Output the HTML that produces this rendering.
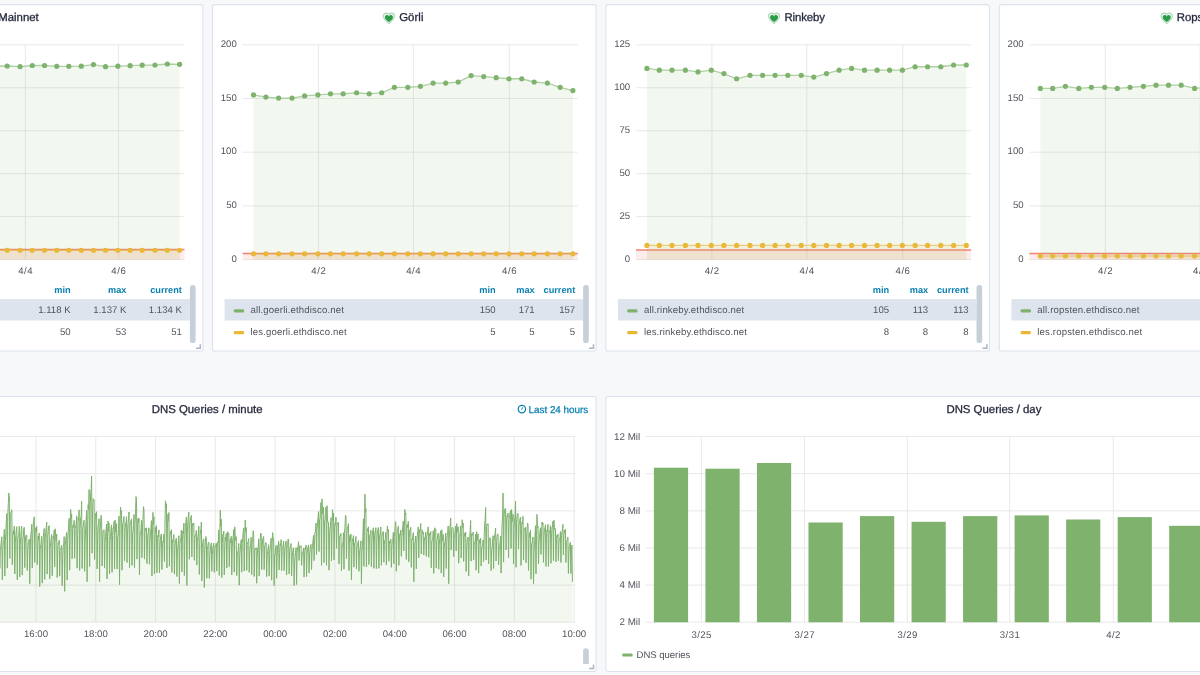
<!DOCTYPE html>
<html lang="en">
<head>
<meta charset="utf-8">
<title>DNS Discovery - Grafana</title>
<style>
*{box-sizing:border-box}
html,body{margin:0;padding:0}
body{width:1200px;height:675px;overflow:hidden;background:#f7f8fa;font-family:"Liberation Sans",sans-serif;color:#52545c;text-rendering:geometricPrecision}
.dash{position:relative;width:1200px;height:675px;overflow:hidden}
.panel{position:absolute;margin:0;will-change:transform}
.gfx{position:absolute;left:0;top:0;display:block;overflow:visible}
.gfx text{font-family:"Liberation Sans",sans-serif;text-rendering:geometricPrecision}
.title{position:absolute;margin:0;font-size:11.4px;line-height:14px;font-weight:400;color:#262a3d;white-space:nowrap;-webkit-text-stroke:0.3px #262a3d}
.tinfo{position:absolute;font-size:9.9px;line-height:13px;color:#0a80b2;white-space:nowrap;-webkit-text-stroke:0.25px #0a80b2}
.legend span{position:absolute;white-space:nowrap;font-size:9.6px;line-height:13px}
.legend .nm{letter-spacing:0.15px}
.legend .th{font-size:9.2px;font-weight:700;color:#0a80b2}
</style>
</head>
<body>
<main class="dash">
<section class="panel" style="left:-181px;top:4px;width:385px;height:348px">
<svg class="gfx" width="385" height="348" viewBox="-181 4 385 348">
<rect x="-180.7" y="4.6" width="383.6" height="346.47" rx="2.4" fill="#fff" stroke="#dce2ec" stroke-width="1.05"/>
<path d="M-139.4 259.6H184.5M-139.4 216.64H184.5M-139.4 173.68H184.5M-139.4 130.72H184.5M-139.4 87.76H184.5M-139.4 44.8H184.5M-67.7 44.6V259.6M25.4 44.6V259.6M118.5 44.6V259.6" stroke="#e6e6e6" stroke-width="0.88" fill="none"/>
<rect x="-139.4" y="249.92" width="323.9" height="9.68" fill="rgba(234,112,112,0.13)"/>
<path d="M-139.4 249.52H184.5" stroke="rgba(237,46,24,0.6)" stroke-width="1.6" fill="none"/>
<path d="M-128.9 66L-116.92 66L-104.66 66L-91.71 66L-79.54 66L-66.7 66L-54.53 66L-42.26 66L-29.32 66L-17.15 66L-5.08 66L7.19 66L20.13 66.6L32.3 65.5L44.57 65.5L56.74 66.3L68.81 66.3L81.27 66.15L93.44 64.6L105.52 66.65L117.88 66.15L130.15 65.65L142.22 65.15L154.97 65L167.33 64L179.6 64.3L179.6 259.6L-128.9 259.6Z" fill="#7eb26d" fill-opacity="0.1"/>
<path d="M-128.9 66L-116.92 66L-104.66 66L-91.71 66L-79.54 66L-66.7 66L-54.53 66L-42.26 66L-29.32 66L-17.15 66L-5.08 66L7.19 66L20.13 66.6L32.3 65.5L44.57 65.5L56.74 66.3L68.81 66.3L81.27 66.15L93.44 64.6L105.52 66.65L117.88 66.15L130.15 65.65L142.22 65.15L154.97 65L167.33 64L179.6 64.3" stroke="#7eb26d" stroke-width="1.3" stroke-opacity="0.6" fill="none"/>
<g fill="#7eb26d"><circle cx="7.19" cy="66" r="2.6"/><circle cx="20.13" cy="66.6" r="2.6"/><circle cx="32.3" cy="65.5" r="2.6"/><circle cx="44.57" cy="65.5" r="2.6"/><circle cx="56.74" cy="66.3" r="2.6"/><circle cx="68.81" cy="66.3" r="2.6"/><circle cx="81.27" cy="66.15" r="2.6"/><circle cx="93.44" cy="64.6" r="2.6"/><circle cx="105.52" cy="66.65" r="2.6"/><circle cx="117.88" cy="66.15" r="2.6"/><circle cx="130.15" cy="65.65" r="2.6"/><circle cx="142.22" cy="65.15" r="2.6"/><circle cx="154.97" cy="65" r="2.6"/><circle cx="167.33" cy="64" r="2.6"/><circle cx="179.6" cy="64.3" r="2.6"/></g>
<path d="M-128.9 250.26L-116.92 250.26L-104.66 250.26L-91.71 250.26L-79.54 250.26L-66.7 250.26L-54.53 250.26L-42.26 250.26L-29.32 250.26L-17.15 250.26L-5.08 250.26L7.19 250.26L20.13 250.26L32.3 250.26L44.57 250.26L56.74 250.26L68.81 250.26L81.27 250.26L93.44 250.26L105.52 250.26L117.88 250.26L130.15 250.26L142.22 250.26L154.97 250.26L167.33 250.26L179.6 250.26L179.6 259.6L-128.9 259.6Z" fill="#eab839" fill-opacity="0.1"/>
<path d="M-128.9 250.26L-116.92 250.26L-104.66 250.26L-91.71 250.26L-79.54 250.26L-66.7 250.26L-54.53 250.26L-42.26 250.26L-29.32 250.26L-17.15 250.26L-5.08 250.26L7.19 250.26L20.13 250.26L32.3 250.26L44.57 250.26L56.74 250.26L68.81 250.26L81.27 250.26L93.44 250.26L105.52 250.26L117.88 250.26L130.15 250.26L142.22 250.26L154.97 250.26L167.33 250.26L179.6 250.26" stroke="#eab839" stroke-width="1.3" stroke-opacity="0.6" fill="none"/>
<g fill="#eab839"><circle cx="7.19" cy="250.26" r="2.6"/><circle cx="20.13" cy="250.26" r="2.6"/><circle cx="32.3" cy="250.26" r="2.6"/><circle cx="44.57" cy="250.26" r="2.6"/><circle cx="56.74" cy="250.26" r="2.6"/><circle cx="68.81" cy="250.26" r="2.6"/><circle cx="81.27" cy="250.26" r="2.6"/><circle cx="93.44" cy="250.26" r="2.6"/><circle cx="105.52" cy="250.26" r="2.6"/><circle cx="117.88" cy="250.26" r="2.6"/><circle cx="130.15" cy="250.26" r="2.6"/><circle cx="142.22" cy="250.26" r="2.6"/><circle cx="154.97" cy="250.26" r="2.6"/><circle cx="167.33" cy="250.26" r="2.6"/><circle cx="179.6" cy="250.26" r="2.6"/></g>
<g class="ax">
<text x="-145.2" y="261.64" text-anchor="end" font-size="9.6" fill="#52545c">0</text>
<text x="-145.2" y="218.68" text-anchor="end" font-size="9.6" fill="#52545c">250</text>
<text x="-145.2" y="175.72" text-anchor="end" font-size="9.6" fill="#52545c">500</text>
<text x="-145.2" y="132.76" text-anchor="end" font-size="9.6" fill="#52545c">750</text>
<text x="-145.2" y="89.8" text-anchor="end" font-size="9.6" fill="#52545c">1.0 K</text>
<text x="-145.2" y="46.84" text-anchor="end" font-size="9.6" fill="#52545c">1.3 K</text>
<text x="-67.4" y="273.84" text-anchor="middle" font-size="9.6" fill="#52545c" letter-spacing="0.55">4/2</text>
<text x="25.7" y="273.84" text-anchor="middle" font-size="9.6" fill="#52545c" letter-spacing="0.55">4/4</text>
<text x="118.8" y="273.84" text-anchor="middle" font-size="9.6" fill="#52545c" letter-spacing="0.55">4/6</text>
</g>
<rect x="-168.6" y="299.1" width="358.4" height="21.4" fill="#dde4ed"/>
<rect x="-159.4" y="309.3" width="10.3" height="3.2" rx="1.2" fill="#7eb26d"/>
<rect x="-159.4" y="331.1" width="10.3" height="3.2" rx="1.2" fill="#eab839"/>
<rect x="189.9" y="285.1" width="5.7" height="58" rx="2.85" fill="#c7d0d9"/>
<path d="M195.9 348.2H200.3V344.2" stroke="#adb5c1" stroke-width="1.5" fill="none"/>
<g class="heart"><path d="M12 21.5 C5 15.5 1 11.8 1 7.2 C1 3.6 3.7 1 7 1 C9 1 10.9 2 12 3.4 C13.1 2 15 1 17 1 C20.3 1 23 3.6 23 7.2 C23 11.8 19 15.5 12 21.5 Z" transform="translate(-18.65 13.15) scale(0.5091 0.5122) translate(-1 -1)" fill="#299c46" fill-opacity="0.08" stroke="#299c46" stroke-opacity="0.36" stroke-width="2.1"/><path d="M12 21.5 C5 15.5 1 11.8 1 7.2 C1 3.6 3.7 1 7 1 C9.4 1 11.2 2.8 12 6 C12.8 2.8 14.6 1 17 1 C20.3 1 23 3.6 23 7.2 C23 11.8 19 15.5 12 21.5 Z" transform="translate(-17.1 15.1) scale(0.3682 0.3317) translate(-1 -1)" fill="#299c46"/></g>
</svg>
<h2 class="title" style="left:179.2px;top:6.7px;letter-spacing:0px">Mainnet</h2>
<div class="legend">
<div class="lrow lhead"><span class="th" style="right:133.4px;top:279.8px">min</span><span class="th" style="right:77.6px;top:279.8px">max</span><span class="th" style="right:22.1px;top:279.8px">current</span></div>
<div class="lrow"><span class="nm" style="left:38.3px;top:299.5px">all.mainnet.ethdisco.net</span><span class="td" style="right:133.4px;top:299.5px">1.118 K</span><span class="td" style="right:77.6px;top:299.5px">1.137 K</span><span class="td" style="right:22.1px;top:299.5px">1.134 K</span></div>
<div class="lrow"><span class="nm" style="left:38.3px;top:321.6px">les.mainnet.ethdisco.net</span><span class="td" style="right:133.4px;top:321.6px">50</span><span class="td" style="right:77.6px;top:321.6px">53</span><span class="td" style="right:22.1px;top:321.6px">51</span></div>
</div>
</section>
<section class="panel" style="left:212px;top:4px;width:385px;height:348px">
<svg class="gfx" width="385" height="348" viewBox="212 4 385 348">
<rect x="212.5" y="4.6" width="383.6" height="346.47" rx="2.4" fill="#fff" stroke="#dce2ec" stroke-width="1.05"/>
<path d="M242.6 259.6H577.7M242.6 205.9H577.7M242.6 152.2H577.7M242.6 98.5H577.7M242.6 44.8H577.7M318.5 44.6V259.6M413.4 44.6V259.6M509.3 44.6V259.6" stroke="#e6e6e6" stroke-width="0.88" fill="none"/>
<rect x="242.6" y="253.83" width="335.1" height="5.77" fill="rgba(234,112,112,0.13)"/>
<path d="M242.6 253.43H577.7" stroke="rgba(237,46,24,0.6)" stroke-width="1.6" fill="none"/>
<path d="M253.5 94.88L265.9 97.03L278.6 98.1L292 98.1L304.6 95.95L317.9 94.88L330.5 93.8L343.2 93.8L356.6 92.73L369.2 93.8L381.7 92.73L394.4 87.36L407.8 87.36L420.4 86.29L433.1 83.06L445.7 83.06L458.2 81.99L471.1 75.55L483.7 76.62L496.2 77.69L509 78.77L521.7 78.77L534.2 81.99L547.4 83.06L560.2 87.36L572.9 90.58L572.9 259.6L253.5 259.6Z" fill="#7eb26d" fill-opacity="0.1"/>
<path d="M253.5 94.88L265.9 97.03L278.6 98.1L292 98.1L304.6 95.95L317.9 94.88L330.5 93.8L343.2 93.8L356.6 92.73L369.2 93.8L381.7 92.73L394.4 87.36L407.8 87.36L420.4 86.29L433.1 83.06L445.7 83.06L458.2 81.99L471.1 75.55L483.7 76.62L496.2 77.69L509 78.77L521.7 78.77L534.2 81.99L547.4 83.06L560.2 87.36L572.9 90.58" stroke="#7eb26d" stroke-width="1.3" stroke-opacity="0.6" fill="none"/>
<g fill="#7eb26d"><circle cx="253.5" cy="94.88" r="2.6"/><circle cx="265.9" cy="97.03" r="2.6"/><circle cx="278.6" cy="98.1" r="2.6"/><circle cx="292" cy="98.1" r="2.6"/><circle cx="304.6" cy="95.95" r="2.6"/><circle cx="317.9" cy="94.88" r="2.6"/><circle cx="330.5" cy="93.8" r="2.6"/><circle cx="343.2" cy="93.8" r="2.6"/><circle cx="356.6" cy="92.73" r="2.6"/><circle cx="369.2" cy="93.8" r="2.6"/><circle cx="381.7" cy="92.73" r="2.6"/><circle cx="394.4" cy="87.36" r="2.6"/><circle cx="407.8" cy="87.36" r="2.6"/><circle cx="420.4" cy="86.29" r="2.6"/><circle cx="433.1" cy="83.06" r="2.6"/><circle cx="445.7" cy="83.06" r="2.6"/><circle cx="458.2" cy="81.99" r="2.6"/><circle cx="471.1" cy="75.55" r="2.6"/><circle cx="483.7" cy="76.62" r="2.6"/><circle cx="496.2" cy="77.69" r="2.6"/><circle cx="509" cy="78.77" r="2.6"/><circle cx="521.7" cy="78.77" r="2.6"/><circle cx="534.2" cy="81.99" r="2.6"/><circle cx="547.4" cy="83.06" r="2.6"/><circle cx="560.2" cy="87.36" r="2.6"/><circle cx="572.9" cy="90.58" r="2.6"/></g>
<path d="M253.5 253.83L265.9 253.83L278.6 253.83L292 253.83L304.6 253.83L317.9 253.83L330.5 253.83L343.2 253.83L356.6 253.83L369.2 253.83L381.7 253.83L394.4 253.83L407.8 253.83L420.4 253.83L433.1 253.83L445.7 253.83L458.2 253.83L471.1 253.83L483.7 253.83L496.2 253.83L509 253.83L521.7 253.83L534.2 253.83L547.4 253.83L560.2 253.83L572.9 253.83L572.9 259.6L253.5 259.6Z" fill="#eab839" fill-opacity="0.1"/>
<path d="M253.5 253.83L265.9 253.83L278.6 253.83L292 253.83L304.6 253.83L317.9 253.83L330.5 253.83L343.2 253.83L356.6 253.83L369.2 253.83L381.7 253.83L394.4 253.83L407.8 253.83L420.4 253.83L433.1 253.83L445.7 253.83L458.2 253.83L471.1 253.83L483.7 253.83L496.2 253.83L509 253.83L521.7 253.83L534.2 253.83L547.4 253.83L560.2 253.83L572.9 253.83" stroke="#eab839" stroke-width="1.3" stroke-opacity="0.6" fill="none"/>
<g fill="#eab839"><circle cx="253.5" cy="253.83" r="2.6"/><circle cx="265.9" cy="253.83" r="2.6"/><circle cx="278.6" cy="253.83" r="2.6"/><circle cx="292" cy="253.83" r="2.6"/><circle cx="304.6" cy="253.83" r="2.6"/><circle cx="317.9" cy="253.83" r="2.6"/><circle cx="330.5" cy="253.83" r="2.6"/><circle cx="343.2" cy="253.83" r="2.6"/><circle cx="356.6" cy="253.83" r="2.6"/><circle cx="369.2" cy="253.83" r="2.6"/><circle cx="381.7" cy="253.83" r="2.6"/><circle cx="394.4" cy="253.83" r="2.6"/><circle cx="407.8" cy="253.83" r="2.6"/><circle cx="420.4" cy="253.83" r="2.6"/><circle cx="433.1" cy="253.83" r="2.6"/><circle cx="445.7" cy="253.83" r="2.6"/><circle cx="458.2" cy="253.83" r="2.6"/><circle cx="471.1" cy="253.83" r="2.6"/><circle cx="483.7" cy="253.83" r="2.6"/><circle cx="496.2" cy="253.83" r="2.6"/><circle cx="509" cy="253.83" r="2.6"/><circle cx="521.7" cy="253.83" r="2.6"/><circle cx="534.2" cy="253.83" r="2.6"/><circle cx="547.4" cy="253.83" r="2.6"/><circle cx="560.2" cy="253.83" r="2.6"/><circle cx="572.9" cy="253.83" r="2.6"/></g>
<g class="ax">
<text x="236.8" y="261.64" text-anchor="end" font-size="9.6" fill="#52545c">0</text>
<text x="236.8" y="207.94" text-anchor="end" font-size="9.6" fill="#52545c">50</text>
<text x="236.8" y="154.24" text-anchor="end" font-size="9.6" fill="#52545c">100</text>
<text x="236.8" y="100.54" text-anchor="end" font-size="9.6" fill="#52545c">150</text>
<text x="236.8" y="46.84" text-anchor="end" font-size="9.6" fill="#52545c">200</text>
<text x="318.8" y="273.84" text-anchor="middle" font-size="9.6" fill="#52545c" letter-spacing="0.55">4/2</text>
<text x="413.7" y="273.84" text-anchor="middle" font-size="9.6" fill="#52545c" letter-spacing="0.55">4/4</text>
<text x="509.6" y="273.84" text-anchor="middle" font-size="9.6" fill="#52545c" letter-spacing="0.55">4/6</text>
</g>
<rect x="224.6" y="299.1" width="358.4" height="21.4" fill="#dde4ed"/>
<rect x="233.8" y="309.3" width="10.3" height="3.2" rx="1.2" fill="#7eb26d"/>
<rect x="233.8" y="331.1" width="10.3" height="3.2" rx="1.2" fill="#eab839"/>
<rect x="583.1" y="285.1" width="5.7" height="58" rx="2.85" fill="#c7d0d9"/>
<path d="M589.1 348.2H593.5V344.2" stroke="#adb5c1" stroke-width="1.5" fill="none"/>
<g class="heart"><path d="M12 21.5 C5 15.5 1 11.8 1 7.2 C1 3.6 3.7 1 7 1 C9 1 10.9 2 12 3.4 C13.1 2 15 1 17 1 C20.3 1 23 3.6 23 7.2 C23 11.8 19 15.5 12 21.5 Z" transform="translate(383.35 13.15) scale(0.5091 0.5122) translate(-1 -1)" fill="#299c46" fill-opacity="0.08" stroke="#299c46" stroke-opacity="0.36" stroke-width="2.1"/><path d="M12 21.5 C5 15.5 1 11.8 1 7.2 C1 3.6 3.7 1 7 1 C9.4 1 11.2 2.8 12 6 C12.8 2.8 14.6 1 17 1 C20.3 1 23 3.6 23 7.2 C23 11.8 19 15.5 12 21.5 Z" transform="translate(384.9 15.1) scale(0.3682 0.3317) translate(-1 -1)" fill="#299c46"/></g>
</svg>
<h2 class="title" style="left:187.2px;top:6.7px;letter-spacing:0.05px">Görli</h2>
<div class="legend">
<div class="lrow lhead"><span class="th" style="right:101.3px;top:279.8px">min</span><span class="th" style="right:62.3px;top:279.8px">max</span><span class="th" style="right:21.8px;top:279.8px">current</span></div>
<div class="lrow"><span class="nm" style="left:38.5px;top:299.5px">all.goerli.ethdisco.net</span><span class="td" style="right:101.3px;top:299.5px">150</span><span class="td" style="right:62.3px;top:299.5px">171</span><span class="td" style="right:21.8px;top:299.5px">157</span></div>
<div class="lrow"><span class="nm" style="left:38.5px;top:321.6px">les.goerli.ethdisco.net</span><span class="td" style="right:101.3px;top:321.6px">5</span><span class="td" style="right:62.3px;top:321.6px">5</span><span class="td" style="right:21.8px;top:321.6px">5</span></div>
</div>
</section>
<section class="panel" style="left:605px;top:4px;width:385px;height:348px">
<svg class="gfx" width="385" height="348" viewBox="605 4 385 348">
<rect x="605.9" y="4.6" width="383.6" height="346.47" rx="2.4" fill="#fff" stroke="#dce2ec" stroke-width="1.05"/>
<path d="M636 259.6H971.1M636 216.64H971.1M636 173.68H971.1M636 130.72H971.1M636 87.76H971.1M636 44.8H971.1M711.9 44.6V259.6M806.8 44.6V259.6M902.7 44.6V259.6" stroke="#e6e6e6" stroke-width="0.88" fill="none"/>
<rect x="636" y="250.44" width="335.1" height="9.16" fill="rgba(234,112,112,0.13)"/>
<path d="M636 250.04H971.1" stroke="rgba(237,46,24,0.6)" stroke-width="1.6" fill="none"/>
<path d="M646.9 68.46L659.3 70.18L672 70.18L685.4 70.18L698 71.89L711.3 70.18L723.9 73.61L736.6 78.77L750 75.33L762.6 75.33L775.1 75.33L787.8 75.33L801.2 75.33L813.8 77.05L826.5 73.61L839.1 70.18L851.6 68.46L864.5 70.18L877.1 70.18L889.6 70.18L902.4 70.18L915.1 66.74L927.6 66.74L940.8 66.74L953.6 65.02L966.3 65.02L966.3 259.6L646.9 259.6Z" fill="#7eb26d" fill-opacity="0.1"/>
<path d="M646.9 68.46L659.3 70.18L672 70.18L685.4 70.18L698 71.89L711.3 70.18L723.9 73.61L736.6 78.77L750 75.33L762.6 75.33L775.1 75.33L787.8 75.33L801.2 75.33L813.8 77.05L826.5 73.61L839.1 70.18L851.6 68.46L864.5 70.18L877.1 70.18L889.6 70.18L902.4 70.18L915.1 66.74L927.6 66.74L940.8 66.74L953.6 65.02L966.3 65.02" stroke="#7eb26d" stroke-width="1.3" stroke-opacity="0.6" fill="none"/>
<g fill="#7eb26d"><circle cx="646.9" cy="68.46" r="2.6"/><circle cx="659.3" cy="70.18" r="2.6"/><circle cx="672" cy="70.18" r="2.6"/><circle cx="685.4" cy="70.18" r="2.6"/><circle cx="698" cy="71.89" r="2.6"/><circle cx="711.3" cy="70.18" r="2.6"/><circle cx="723.9" cy="73.61" r="2.6"/><circle cx="736.6" cy="78.77" r="2.6"/><circle cx="750" cy="75.33" r="2.6"/><circle cx="762.6" cy="75.33" r="2.6"/><circle cx="775.1" cy="75.33" r="2.6"/><circle cx="787.8" cy="75.33" r="2.6"/><circle cx="801.2" cy="75.33" r="2.6"/><circle cx="813.8" cy="77.05" r="2.6"/><circle cx="826.5" cy="73.61" r="2.6"/><circle cx="839.1" cy="70.18" r="2.6"/><circle cx="851.6" cy="68.46" r="2.6"/><circle cx="864.5" cy="70.18" r="2.6"/><circle cx="877.1" cy="70.18" r="2.6"/><circle cx="889.6" cy="70.18" r="2.6"/><circle cx="902.4" cy="70.18" r="2.6"/><circle cx="915.1" cy="66.74" r="2.6"/><circle cx="927.6" cy="66.74" r="2.6"/><circle cx="940.8" cy="66.74" r="2.6"/><circle cx="953.6" cy="65.02" r="2.6"/><circle cx="966.3" cy="65.02" r="2.6"/></g>
<path d="M646.9 245.45L659.3 245.45L672 245.45L685.4 245.45L698 245.45L711.3 245.45L723.9 245.45L736.6 245.45L750 245.45L762.6 245.45L775.1 245.45L787.8 245.45L801.2 245.45L813.8 245.45L826.5 245.45L839.1 245.45L851.6 245.45L864.5 245.45L877.1 245.45L889.6 245.45L902.4 245.45L915.1 245.45L927.6 245.45L940.8 245.45L953.6 245.45L966.3 245.45L966.3 259.6L646.9 259.6Z" fill="#eab839" fill-opacity="0.1"/>
<path d="M646.9 245.45L659.3 245.45L672 245.45L685.4 245.45L698 245.45L711.3 245.45L723.9 245.45L736.6 245.45L750 245.45L762.6 245.45L775.1 245.45L787.8 245.45L801.2 245.45L813.8 245.45L826.5 245.45L839.1 245.45L851.6 245.45L864.5 245.45L877.1 245.45L889.6 245.45L902.4 245.45L915.1 245.45L927.6 245.45L940.8 245.45L953.6 245.45L966.3 245.45" stroke="#eab839" stroke-width="1.3" stroke-opacity="0.6" fill="none"/>
<g fill="#eab839"><circle cx="646.9" cy="245.45" r="2.6"/><circle cx="659.3" cy="245.45" r="2.6"/><circle cx="672" cy="245.45" r="2.6"/><circle cx="685.4" cy="245.45" r="2.6"/><circle cx="698" cy="245.45" r="2.6"/><circle cx="711.3" cy="245.45" r="2.6"/><circle cx="723.9" cy="245.45" r="2.6"/><circle cx="736.6" cy="245.45" r="2.6"/><circle cx="750" cy="245.45" r="2.6"/><circle cx="762.6" cy="245.45" r="2.6"/><circle cx="775.1" cy="245.45" r="2.6"/><circle cx="787.8" cy="245.45" r="2.6"/><circle cx="801.2" cy="245.45" r="2.6"/><circle cx="813.8" cy="245.45" r="2.6"/><circle cx="826.5" cy="245.45" r="2.6"/><circle cx="839.1" cy="245.45" r="2.6"/><circle cx="851.6" cy="245.45" r="2.6"/><circle cx="864.5" cy="245.45" r="2.6"/><circle cx="877.1" cy="245.45" r="2.6"/><circle cx="889.6" cy="245.45" r="2.6"/><circle cx="902.4" cy="245.45" r="2.6"/><circle cx="915.1" cy="245.45" r="2.6"/><circle cx="927.6" cy="245.45" r="2.6"/><circle cx="940.8" cy="245.45" r="2.6"/><circle cx="953.6" cy="245.45" r="2.6"/><circle cx="966.3" cy="245.45" r="2.6"/></g>
<g class="ax">
<text x="630.2" y="261.64" text-anchor="end" font-size="9.6" fill="#52545c">0</text>
<text x="630.2" y="218.68" text-anchor="end" font-size="9.6" fill="#52545c">25</text>
<text x="630.2" y="175.72" text-anchor="end" font-size="9.6" fill="#52545c">50</text>
<text x="630.2" y="132.76" text-anchor="end" font-size="9.6" fill="#52545c">75</text>
<text x="630.2" y="89.8" text-anchor="end" font-size="9.6" fill="#52545c">100</text>
<text x="630.2" y="46.84" text-anchor="end" font-size="9.6" fill="#52545c">125</text>
<text x="712.2" y="273.84" text-anchor="middle" font-size="9.6" fill="#52545c" letter-spacing="0.55">4/2</text>
<text x="807.1" y="273.84" text-anchor="middle" font-size="9.6" fill="#52545c" letter-spacing="0.55">4/4</text>
<text x="903" y="273.84" text-anchor="middle" font-size="9.6" fill="#52545c" letter-spacing="0.55">4/6</text>
</g>
<rect x="618" y="299.1" width="358.4" height="21.4" fill="#dde4ed"/>
<rect x="627.2" y="309.3" width="10.3" height="3.2" rx="1.2" fill="#7eb26d"/>
<rect x="627.2" y="331.1" width="10.3" height="3.2" rx="1.2" fill="#eab839"/>
<rect x="976.5" y="285.1" width="5.7" height="58" rx="2.85" fill="#c7d0d9"/>
<path d="M982.5 348.2H986.9V344.2" stroke="#adb5c1" stroke-width="1.5" fill="none"/>
<g class="heart"><path d="M12 21.5 C5 15.5 1 11.8 1 7.2 C1 3.6 3.7 1 7 1 C9 1 10.9 2 12 3.4 C13.1 2 15 1 17 1 C20.3 1 23 3.6 23 7.2 C23 11.8 19 15.5 12 21.5 Z" transform="translate(768.45 13.15) scale(0.5091 0.5122) translate(-1 -1)" fill="#299c46" fill-opacity="0.08" stroke="#299c46" stroke-opacity="0.36" stroke-width="2.1"/><path d="M12 21.5 C5 15.5 1 11.8 1 7.2 C1 3.6 3.7 1 7 1 C9.4 1 11.2 2.8 12 6 C12.8 2.8 14.6 1 17 1 C20.3 1 23 3.6 23 7.2 C23 11.8 19 15.5 12 21.5 Z" transform="translate(770 15.1) scale(0.3682 0.3317) translate(-1 -1)" fill="#299c46"/></g>
</svg>
<h2 class="title" style="left:179.5px;top:6.7px;letter-spacing:-0.12px">Rinkeby</h2>
<div class="legend">
<div class="lrow lhead"><span class="th" style="right:100.9px;top:279.8px">min</span><span class="th" style="right:61.9px;top:279.8px">max</span><span class="th" style="right:21.4px;top:279.8px">current</span></div>
<div class="lrow"><span class="nm" style="left:38.9px;top:299.5px">all.rinkeby.ethdisco.net</span><span class="td" style="right:100.9px;top:299.5px">105</span><span class="td" style="right:61.9px;top:299.5px">113</span><span class="td" style="right:21.4px;top:299.5px">113</span></div>
<div class="lrow"><span class="nm" style="left:38.9px;top:321.6px">les.rinkeby.ethdisco.net</span><span class="td" style="right:100.9px;top:321.6px">8</span><span class="td" style="right:61.9px;top:321.6px">8</span><span class="td" style="right:21.4px;top:321.6px">8</span></div>
</div>
</section>
<section class="panel" style="left:999px;top:4px;width:385px;height:348px">
<svg class="gfx" width="385" height="348" viewBox="999 4 385 348">
<rect x="999.3" y="4.6" width="383.6" height="346.47" rx="2.4" fill="#fff" stroke="#dce2ec" stroke-width="1.05"/>
<path d="M1029.4 259.6H1364.5M1029.4 205.9H1364.5M1029.4 152.2H1364.5M1029.4 98.5H1364.5M1029.4 44.8H1364.5M1105.3 44.6V259.6M1200.2 44.6V259.6M1296.1 44.6V259.6" stroke="#e6e6e6" stroke-width="0.88" fill="none"/>
<rect x="1029.4" y="253.83" width="335.1" height="5.77" fill="rgba(234,112,112,0.13)"/>
<path d="M1029.4 253.43H1364.5" stroke="rgba(237,46,24,0.6)" stroke-width="1.6" fill="none"/>
<path d="M1040.3 88.43L1052.7 88.43L1065.4 86.29L1078.8 88.43L1091.4 87.36L1104.7 87.36L1117.3 88.43L1130 87.36L1143.4 86.29L1156 85.21L1168.5 85.21L1181.2 85.21L1194.6 88.43L1207.2 87.36L1219.9 87.36L1232.5 87.36L1245 86.29L1257.9 86.29L1270.5 87.36L1283 87.36L1295.8 86.29L1308.5 86.29L1321 85.21L1334.2 86.29L1347 86.29L1359.7 87.36L1359.7 259.6L1040.3 259.6Z" fill="#7eb26d" fill-opacity="0.1"/>
<path d="M1040.3 88.43L1052.7 88.43L1065.4 86.29L1078.8 88.43L1091.4 87.36L1104.7 87.36L1117.3 88.43L1130 87.36L1143.4 86.29L1156 85.21L1168.5 85.21L1181.2 85.21L1194.6 88.43L1207.2 87.36L1219.9 87.36L1232.5 87.36L1245 86.29L1257.9 86.29L1270.5 87.36L1283 87.36L1295.8 86.29L1308.5 86.29L1321 85.21L1334.2 86.29L1347 86.29L1359.7 87.36" stroke="#7eb26d" stroke-width="1.3" stroke-opacity="0.6" fill="none"/>
<g fill="#7eb26d"><circle cx="1040.3" cy="88.43" r="2.6"/><circle cx="1052.7" cy="88.43" r="2.6"/><circle cx="1065.4" cy="86.29" r="2.6"/><circle cx="1078.8" cy="88.43" r="2.6"/><circle cx="1091.4" cy="87.36" r="2.6"/><circle cx="1104.7" cy="87.36" r="2.6"/><circle cx="1117.3" cy="88.43" r="2.6"/><circle cx="1130" cy="87.36" r="2.6"/><circle cx="1143.4" cy="86.29" r="2.6"/><circle cx="1156" cy="85.21" r="2.6"/><circle cx="1168.5" cy="85.21" r="2.6"/><circle cx="1181.2" cy="85.21" r="2.6"/><circle cx="1194.6" cy="88.43" r="2.6"/></g>
<path d="M1040.3 255.98L1052.7 255.98L1065.4 255.98L1078.8 255.98L1091.4 255.98L1104.7 255.98L1117.3 255.98L1130 255.98L1143.4 255.98L1156 255.98L1168.5 255.98L1181.2 255.98L1194.6 255.98L1207.2 255.98L1219.9 255.98L1232.5 255.98L1245 255.98L1257.9 255.98L1270.5 255.98L1283 255.98L1295.8 255.98L1308.5 255.98L1321 255.98L1334.2 255.98L1347 255.98L1359.7 255.98L1359.7 259.6L1040.3 259.6Z" fill="#eab839" fill-opacity="0.1"/>
<path d="M1040.3 255.98L1052.7 255.98L1065.4 255.98L1078.8 255.98L1091.4 255.98L1104.7 255.98L1117.3 255.98L1130 255.98L1143.4 255.98L1156 255.98L1168.5 255.98L1181.2 255.98L1194.6 255.98L1207.2 255.98L1219.9 255.98L1232.5 255.98L1245 255.98L1257.9 255.98L1270.5 255.98L1283 255.98L1295.8 255.98L1308.5 255.98L1321 255.98L1334.2 255.98L1347 255.98L1359.7 255.98" stroke="#eab839" stroke-width="1.3" stroke-opacity="0.6" fill="none"/>
<g fill="#eab839"><circle cx="1040.3" cy="255.98" r="2.6"/><circle cx="1052.7" cy="255.98" r="2.6"/><circle cx="1065.4" cy="255.98" r="2.6"/><circle cx="1078.8" cy="255.98" r="2.6"/><circle cx="1091.4" cy="255.98" r="2.6"/><circle cx="1104.7" cy="255.98" r="2.6"/><circle cx="1117.3" cy="255.98" r="2.6"/><circle cx="1130" cy="255.98" r="2.6"/><circle cx="1143.4" cy="255.98" r="2.6"/><circle cx="1156" cy="255.98" r="2.6"/><circle cx="1168.5" cy="255.98" r="2.6"/><circle cx="1181.2" cy="255.98" r="2.6"/><circle cx="1194.6" cy="255.98" r="2.6"/></g>
<g class="ax">
<text x="1023.6" y="261.64" text-anchor="end" font-size="9.6" fill="#52545c">0</text>
<text x="1023.6" y="207.94" text-anchor="end" font-size="9.6" fill="#52545c">50</text>
<text x="1023.6" y="154.24" text-anchor="end" font-size="9.6" fill="#52545c">100</text>
<text x="1023.6" y="100.54" text-anchor="end" font-size="9.6" fill="#52545c">150</text>
<text x="1023.6" y="46.84" text-anchor="end" font-size="9.6" fill="#52545c">200</text>
<text x="1105.6" y="273.84" text-anchor="middle" font-size="9.6" fill="#52545c" letter-spacing="0.55">4/2</text>
<text x="1200.5" y="273.84" text-anchor="middle" font-size="9.6" fill="#52545c" letter-spacing="0.55">4/4</text>
<text x="1296.4" y="273.84" text-anchor="middle" font-size="9.6" fill="#52545c" letter-spacing="0.55">4/6</text>
</g>
<rect x="1011.4" y="299.1" width="358.4" height="21.4" fill="#dde4ed"/>
<rect x="1020.6" y="309.3" width="10.3" height="3.2" rx="1.2" fill="#7eb26d"/>
<rect x="1020.6" y="331.1" width="10.3" height="3.2" rx="1.2" fill="#eab839"/>
<rect x="1369.9" y="285.1" width="5.7" height="58" rx="2.85" fill="#c7d0d9"/>
<path d="M1375.9 348.2H1380.3V344.2" stroke="#adb5c1" stroke-width="1.5" fill="none"/>
<g class="heart"><path d="M12 21.5 C5 15.5 1 11.8 1 7.2 C1 3.6 3.7 1 7 1 C9 1 10.9 2 12 3.4 C13.1 2 15 1 17 1 C20.3 1 23 3.6 23 7.2 C23 11.8 19 15.5 12 21.5 Z" transform="translate(1161.15 13.15) scale(0.5091 0.5122) translate(-1 -1)" fill="#299c46" fill-opacity="0.08" stroke="#299c46" stroke-opacity="0.36" stroke-width="2.1"/><path d="M12 21.5 C5 15.5 1 11.8 1 7.2 C1 3.6 3.7 1 7 1 C9.4 1 11.2 2.8 12 6 C12.8 2.8 14.6 1 17 1 C20.3 1 23 3.6 23 7.2 C23 11.8 19 15.5 12 21.5 Z" transform="translate(1162.7 15.1) scale(0.3682 0.3317) translate(-1 -1)" fill="#299c46"/></g>
</svg>
<h2 class="title" style="left:177.8px;top:6.7px;letter-spacing:-0.1px">Ropsten</h2>
<div class="legend">
<div class="lrow lhead"><span class="th" style="right:101.5px;top:279.8px">min</span><span class="th" style="right:62.5px;top:279.8px">max</span><span class="th" style="right:22px;top:279.8px">current</span></div>
<div class="lrow"><span class="nm" style="left:38.3px;top:299.5px">all.ropsten.ethdisco.net</span><span class="td" style="right:101.5px;top:299.5px">158</span><span class="td" style="right:62.5px;top:299.5px">162</span><span class="td" style="right:22px;top:299.5px">160</span></div>
<div class="lrow"><span class="nm" style="left:38.3px;top:321.6px">les.ropsten.ethdisco.net</span><span class="td" style="right:101.5px;top:321.6px">3</span><span class="td" style="right:62.5px;top:321.6px">3</span><span class="td" style="right:22px;top:321.6px">3</span></div>
</div>
</section>
<section class="panel" style="left:-181px;top:396px;width:779px;height:277px">
<svg class="gfx" width="779" height="277" viewBox="-181 396 779 277">
<rect x="-180.7" y="396.4" width="776.8" height="275" rx="2.4" fill="#fff" stroke="#dce2ec" stroke-width="1.05"/>
<path d="M-140 436.6H575.6M-140 473.73H575.6M-140 510.86H575.6M-140 547.99H575.6M-140 585.12H575.6M-140 622.25H575.6M-83.58 436.6V622.25M-23.79 436.6V622.25M36 436.6V622.25M95.79 436.6V622.25M155.58 436.6V622.25M215.37 436.6V622.25M275.16 436.6V622.25M334.95 436.6V622.25M394.74 436.6V622.25M454.53 436.6V622.25M514.32 436.6V622.25M574.11 436.6V622.25" stroke="#e6e6e6" stroke-width="0.88" fill="none"/>
<path d="M-3.66 544.75L-3.16 541.29L-2.66 569.32L-2.16 549.22L-1.66 545.66L-1.16 543.01L-0.66 541.29L-0.17 568.51L0.33 549.74L0.83 545.86L1.33 540.84L1.83 536.72L2.33 579.83L2.83 548.88L3.33 540.72L3.82 539.61L4.32 529.28L4.82 575.96L5.32 541.12L5.82 532.8L6.32 520.71L6.82 513.5L7.32 568.08L7.81 515.9L8.31 503.81L8.81 493.12L9.31 495.52L9.81 558.35L10.31 514.84L10.81 512.6L11.31 512.25L11.8 509.7L12.3 564.6L12.8 534.5L13.3 530.71L13.8 534.62L14.3 526.08L14.8 573.9L15.3 542.83L15.79 535.62L16.29 529.95L16.79 526.7L17.29 579.83L17.79 537.79L18.29 536.83L18.79 535.18L19.29 526.3L19.78 576.89L20.28 544.19L20.78 536.36L21.28 529.21L21.78 526.16L22.28 575.06L22.78 539.67L23.28 537.25L23.77 528.63L24.27 527.41L24.77 567.67L25.27 542.24L25.77 535.67L26.27 536.08L26.77 534.89L27.27 570.67L27.76 549.22L28.26 542.6L28.76 542.59L29.26 539.13L29.76 583.68L30.26 548.99L30.76 534.94L31.26 532.13L31.75 524.17L32.25 568.08L32.75 535.99L33.25 523.91L33.75 520.53L34.25 516.82L34.75 562.37L35.25 531.54L35.75 527.8L36.24 531.82L36.74 526.46L37.24 564.63L37.74 545.68L38.24 535.94L38.74 540.12L39.24 533.06L39.73 586.57L40.23 546.13L40.73 547.36L41.23 540.46L41.73 536.46L42.23 583.18L42.73 545.75L43.23 537.58L43.72 532.35L44.22 528.48L44.72 579.34L45.22 538L45.72 532.66L46.22 527.7L46.72 522.02L47.22 574.04L47.71 536.91L48.21 530.82L48.71 526.08L49.21 525.56L49.71 578.86L50.21 547.43L50.71 542.54L51.21 537.8L51.7 534.38L52.2 575.76L52.7 547.62L53.2 536.16L53.7 538.5L54.2 530.02L54.7 566.82L55.2 528.77L55.69 535.03L56.19 540.71L56.69 534.1L57.19 577.52L57.69 550L58.19 542.76L58.69 544.32L59.19 540.2L59.68 576.19L60.18 551.39L60.68 550.63L61.18 546.85L61.68 545.05L62.18 585.82L62.68 556.4L63.18 547.22L63.67 546.33L64.17 536.65L64.67 591.39L65.17 546.57L65.67 540.96L66.17 536.11L66.67 532.48L67.17 579.94L67.66 540.19L68.16 532.3L68.66 525.73L69.16 518.32L69.66 570.19L70.16 532.68L70.66 509.5L71.16 518.39L71.65 514.21L72.15 558.76L72.65 528.23L73.15 524.77L73.65 527.44L74.15 520.35L74.65 558.3L75.15 528.47L75.64 526.3L76.14 524.39L76.64 515.86L77.14 568.14L77.64 534.48L78.14 517.82L78.64 520.44L79.14 509.88L79.63 570.42L80.13 528.23L80.63 517.95L81.13 516.37L81.63 501.21L82.13 568.49L82.63 529.5L83.13 526.18L83.62 522.16L84.12 520.29L84.62 571.3L85.12 542.35L85.62 528.79L86.12 520.66L86.62 510.44L87.12 581.75L87.61 525.76L88.11 504.67L88.61 509.52L89.11 489.52L89.61 566.63L90.11 511.52L90.61 493.14L91.11 489.87L91.6 476.17L92.1 553.15L92.6 511.26L93.1 498.54L93.6 499.93L94.1 499.9L94.6 559.47L95.1 521.99L95.59 513.45L96.09 516.02L96.59 511.73L97.09 568.94L97.59 537.23L98.09 525.64L98.59 524.16L99.09 518.73L99.58 581.75L100.08 531.93L100.58 522.39L101.08 515.28L101.58 517.4L102.08 566L102.58 540.14L103.08 530.75L103.57 530.1L104.07 529.67L104.57 568.09L105.07 542.34L105.57 536.62L106.07 529.76L106.57 524.06L107.07 578.86L107.56 536.09L108.06 521.06L108.56 531.21L109.06 523L109.56 573.87L110.06 540.49L110.56 536.34L111.06 528.27L111.55 524.83L112.05 572.35L112.55 535.38L113.05 527.9L113.55 528.51L114.05 521.43L114.55 569.09L115.05 520.1L115.54 532.09L116.04 527.96L116.54 523.59L117.04 568.99L117.54 537.55L118.04 535.62L118.54 528.74L119.04 516.16L119.53 584.64L120.03 528.4L120.53 507.19L121.03 512.72L121.53 510.65L122.03 570.2L122.53 524.37L123.03 524.64L123.52 518.56L124.02 516.48L124.52 560.78L125.02 530.41L125.52 523.49L126.02 523.47L126.52 516.64L127.02 562.55L127.51 533.14L128.01 523.48L128.51 518.82L129.01 512L129.51 568L130.01 525.5L130.51 523.74L131.01 520.5L131.5 518.87L132 565.46L132.5 534.09L133 531.21L133.5 525.17L134 514.52L134.5 567.63L135 523.23L135.49 515.78L135.99 496.59L136.49 499.35L136.99 559.12L137.49 529.02L137.99 518.75L138.49 523.16L138.99 518.09L139.48 575.01L139.98 536.31L140.48 532.79L140.98 531.07L141.48 520.38L141.98 557.77L142.48 527.24L142.98 519.13L143.47 506.61L143.97 509.75L144.47 559.1L144.97 530.11L145.47 528.17L145.97 530.91L146.47 527.8L146.97 563.49L147.46 540.91L147.96 533.72L148.46 530.99L148.96 527.8L149.46 564.28L149.96 542.21L150.46 532.42L150.96 528.65L151.45 520.63L151.95 575.97L152.45 534.27L152.95 512.39L153.45 524.44L153.95 516.81L154.45 573.74L154.95 537.88L155.44 527.43L155.94 531.89L156.44 525.57L156.94 572.76L157.44 537.8L157.94 535.32L158.44 536.72L158.94 529.93L159.43 572.63L159.93 547.91L160.43 539.19L160.93 535.13L161.43 533.92L161.93 569.55L162.43 547.49L162.93 540.92L163.42 541.72L163.92 533.94L164.42 561.47L164.92 528.22L165.42 500.83L165.92 508.23L166.42 503.74L166.92 567.91L167.41 528.23L167.91 514.25L168.41 520.72L168.91 512.52L169.41 566.23L169.91 537.43L170.41 531.64L170.91 533.67L171.4 529.57L171.9 572.39L172.4 540.3L172.9 541.93L173.4 537.37L173.9 534.56L174.4 574.08L174.9 547.94L175.39 542.91L175.89 539.19L176.39 538.2L176.89 576.53L177.39 550.23L177.89 547.69L178.39 540.15L178.89 535.71L179.38 583.68L179.88 544.38L180.38 539.25L180.88 539.85L181.38 529.98L181.88 571.96L182.38 539.84L182.88 530.97L183.37 533.84L183.87 523.18L184.37 575.5L184.87 539.96L185.37 523.72L185.87 522.44L186.37 517.16L186.87 585.61L187.36 531.83L187.86 522.16L188.36 516.02L188.86 512L189.36 559.29L189.86 523.17L190.36 520.63L190.86 517.29L191.35 515.33L191.85 556.97L192.35 527.59L192.85 523.16L193.35 524.92L193.85 523.06L194.35 560.3L194.85 536.06L195.34 536.23L195.84 535.11L196.34 530.41L196.84 565.14L197.34 540.85L197.84 536.82L198.34 533.84L198.84 526.39L199.33 574.4L199.83 542.44L200.33 530.41L200.83 533.04L201.33 522.02L201.83 580.78L202.33 547.65L202.83 542.76L203.32 538.8L203.82 539.14L204.32 587.53L204.82 549.74L205.32 541.37L205.82 536.47L206.32 537.55L206.82 578.26L207.31 549.36L207.81 546.32L208.31 542.9L208.81 542.29L209.31 578.32L209.81 554.45L210.31 550.81L210.81 544.58L211.3 542.91L211.8 571.32L212.3 554.3L212.8 548.32L213.3 545.22L213.8 543.22L214.3 572.31L214.8 549.97L215.29 545.53L215.79 546.56L216.29 543.22L216.79 571.08L217.29 547.44L217.79 541.82L218.29 542.76L218.79 529.87L219.28 575.39L219.78 537.11L220.28 510.08L220.78 526.26L221.28 519.2L221.78 577.6L222.28 543.34L222.78 534.43L223.27 535.11L223.77 531.15L224.27 574.92L224.77 546.34L225.27 537.29L225.77 540.49L226.27 533.33L226.77 568.16L227.26 542.72L227.76 531.66L228.26 534.49L228.76 533.3L229.26 566.65L229.76 544.78L230.26 538.77L230.76 542.77L231.25 536.26L231.75 575.01L232.25 547.42L232.75 539.34L233.25 536.21L233.75 529.41L234.25 572.13L234.75 526.84L235.24 538.76L235.74 540.4L236.24 536.72L236.74 575.58L237.24 554.23L237.74 551.77L238.24 550.53L238.74 543.4L239.23 585.22L239.73 555.1L240.23 549.1L240.73 544.21L241.23 539.66L241.73 572.23L242.23 543.66L242.73 537.96L243.22 531.73L243.72 527.87L244.22 571.02L244.72 537.78L245.22 520.1L245.72 532.26L246.22 527.6L246.72 570.36L247.21 544.34L247.71 542.61L248.21 541.52L248.71 538.52L249.21 572.33L249.71 553L250.21 546.98L250.71 544.85L251.2 537.23L251.7 574.6L252.2 542.81L252.7 539.77L253.2 530.69L253.7 535.2L254.2 576.45L254.7 549.8L255.19 548.44L255.69 549.41L256.19 547.73L256.69 583.29L257.19 557.1L257.69 547.99L258.19 547.58L258.69 538.82L259.18 576.04L259.68 550.55L260.18 541.62L260.68 533.2L261.18 533.73L261.68 569.6L262.18 547.84L262.68 538.49L263.17 538.16L263.67 536.48L264.17 569.62L264.67 546.82L265.17 545.23L265.67 542.63L266.17 542.84L266.67 576.61L267.16 554.86L267.66 551.55L268.16 548.53L268.66 544.62L269.16 576.09L269.66 553.43L270.16 547.43L270.66 545.63L271.15 538.19L271.65 580.14L272.15 543.97L272.65 532.62L273.15 538.21L273.65 538.44L274.15 585.61L274.65 554.9L275.14 555.03L275.64 547.62L276.14 545.32L276.64 578.29L277.14 556.92L277.64 545.77L278.14 545.49L278.64 540.96L279.13 569.93L279.63 552.42L280.13 543.59L280.63 545.57L281.13 539.62L281.63 570.67L282.13 548.72L282.63 547.65L283.12 544.84L283.62 541.1L284.12 570.58L284.62 551.97L285.12 546.64L285.62 542.7L286.12 540.92L286.62 574.87L287.11 547.63L287.61 544.43L288.11 538.98L288.61 539.81L289.11 573.9L289.61 551.9L290.11 547L290.61 546.93L291.1 543.56L291.6 575.83L292.1 557.88L292.6 552.87L293.1 548.71L293.6 547.82L294.1 585.61L294.6 561.64L295.09 556.63L295.59 552.68L296.09 547.7L296.59 584.5L297.09 554.05L297.59 547.68L298.09 546.3L298.59 541.66L299.08 560.47L299.58 546.14L300.08 546.1L300.58 546.76L301.08 545.52L301.58 565.33L302.08 554.92L302.58 552.57L303.07 552.31L303.57 548.02L304.07 577.09L304.57 555.08L305.07 547.78L305.57 549.57L306.07 545.14L306.57 576.62L307.06 554.55L307.56 549.17L308.06 547.05L308.56 544.98L309.06 573.02L309.56 553.82L310.06 550.28L310.56 545.81L311.05 544.36L311.55 569.53L312.05 550.21L312.55 545.18L313.05 540.3L313.55 535.2L314.05 560.61L314.55 539.7L315.04 531.74L315.54 531.53L316.04 522.98L316.54 554.57L317.04 529.35L317.54 523.52L318.04 517.88L318.54 511.64L319.03 551.57L319.53 519.59L320.03 518.1L320.53 506.84L321.03 502.38L321.53 565.38L322.03 498.9L322.53 513.14L323.02 513.78L323.52 507.34L324.02 562.71L324.52 523.02L325.02 518.9L325.52 512.63L326.02 507.08L326.52 565.29L327.01 505.65L327.51 520.01L328.01 522.63L328.51 522.64L329.01 570.19L329.51 536.82L330.01 526.99L330.51 526.04L331 517.72L331.5 561.02L332 530.85L332.5 509.5L333 519.41L333.5 513.01L334 559.8L334.5 527.59L335 523.53L335.49 524.59L335.99 517.24L336.49 548.29L336.99 526.52L337.49 522.81L337.99 523.69L338.49 522.24L338.98 563.95L339.48 536.1L339.98 535.49L340.48 535.91L340.98 533.39L341.48 570.88L341.98 548.97L342.48 543.47L342.97 543.7L343.47 532.6L343.97 569.12L344.47 533.62L344.97 527.11L345.47 515.28L345.97 516.31L346.47 558.6L346.96 531.86L347.46 528.42L347.96 526.42L348.46 523.74L348.96 570.65L349.46 538.41L349.96 535.36L350.46 541.16L350.95 534.03L351.45 579.83L351.95 547.6L352.45 538.82L352.95 540.55L353.45 535.6L353.95 567.14L354.45 543.99L354.94 542.66L355.44 541.43L355.94 536.43L356.44 568.76L356.94 546.18L357.44 545.92L357.94 543.06L358.44 540.62L358.93 571.2L359.43 552.9L359.93 549.52L360.43 545.64L360.93 540.89L361.43 583.68L361.93 551.89L362.43 546.25L362.92 536.3L363.42 518.76L363.92 566.32L364.42 526.03L364.92 494.08L365.42 512.32L365.92 508.54L366.42 566.82L366.91 533.11L367.41 528.59L367.91 530.75L368.41 526.75L368.91 564.64L369.41 539.9L369.91 534.63L370.41 534.26L370.9 530.31L371.4 566.84L371.9 542.86L372.4 531.92L372.9 530.25L373.4 527.82L373.9 568.34L374.4 540.88L374.89 531.61L375.39 531.85L375.89 527.65L376.39 568.69L376.89 541.9L377.39 530.87L377.89 530.09L378.39 527.55L378.88 568.29L379.38 537.04L379.88 534.77L380.38 529.79L380.88 526.98L381.38 565.24L381.88 537.47L382.38 532.73L382.88 533.17L383.37 531.52L383.87 562.26L384.37 544.44L384.87 539.65L385.37 539.28L385.87 532.06L386.37 564.75L386.87 537.78L387.36 525.88L387.86 531.72L388.36 529.52L388.86 561.23L389.36 541.03L389.86 543.27L390.36 540.75L390.85 539.16L391.35 567.33L391.85 546.97L392.35 540.27L392.85 539.81L393.35 532.29L393.85 563.76L394.35 536.65L394.84 532.04L395.34 521.64L395.84 522.1L396.34 571.27L396.84 537.89L397.34 528.94L397.84 528.93L398.34 526.19L398.83 565.41L399.33 540.03L399.83 533.68L400.33 535.26L400.83 529.99L401.33 556.35L401.83 538.75L402.33 531.12L402.82 525.65L403.32 520.95L403.82 550.99L404.32 527.69L404.82 509.5L405.32 514.68L405.82 513.03L406.32 559.42L406.81 525.96L407.31 524.58L407.81 527.62L408.31 521.34L408.81 561.84L409.31 537.49L409.81 530.01L410.31 530.27L410.8 527.26L411.3 567.34L411.8 539.12L412.3 539.85L412.8 537.06L413.3 532.5L413.8 581.75L414.3 544.28L414.79 543.85L415.29 539.98L415.79 536.05L416.29 568.78L416.79 541.14L417.29 535.68L417.79 531.84L418.29 526.91L418.78 557.88L419.28 533.14L419.78 529.61L420.28 530.62L420.78 523.56L421.28 553.81L421.78 534.79L422.28 529.98L422.77 533.7L423.27 532.16L423.77 555.02L424.27 541.07L424.77 537.25L425.27 537.47L425.77 532.22L426.27 556.35L426.76 536.4L427.26 533.94L427.76 530.91L428.26 526.84L428.76 557.3L429.26 536.07L429.76 533.43L430.26 535.07L430.75 531.45L431.25 567.78L431.75 541.97L432.25 539.92L432.75 539.14L433.25 530.67L433.75 573.44L434.25 543L434.75 527.8L435.24 530.68L435.74 529.39L436.24 568.04L436.74 540.17L437.24 539.21L437.74 534.83L438.24 533.13L438.73 569.21L439.23 545.92L439.73 538.56L440.23 533.98L440.73 530.66L441.23 573.05L441.73 529.73L442.23 537.77L442.72 540.93L443.22 534.52L443.72 576.94L444.22 547.44L444.72 542.5L445.22 540.62L445.72 533.23L446.22 568.47L446.71 541.78L447.21 535.51L447.71 532.44L448.21 526L448.71 583.68L449.21 539.58L449.71 529.74L450.21 524.89L450.7 518.17L451.2 549.96L451.7 529.41L452.2 527.41L452.7 527.24L453.2 528.15L453.7 556.71L454.2 537.8L454.69 534.3L455.19 531.07L455.69 526.03L456.19 550.9L456.69 523.56L457.19 532.26L457.69 528.92L458.19 526.82L458.68 563.22L459.18 536.94L459.68 536.35L460.18 532.26L460.68 525.93L461.18 557.98L461.68 537.16L462.18 519.71L462.67 527.45L463.17 523.13L463.67 561.41L464.17 536.18L464.67 533.29L465.17 536.37L465.67 531.97L466.17 571.48L466.66 548.01L467.16 540.05L467.66 537.92L468.16 536.96L468.66 575.97L469.16 541.2L469.66 537.77L470.16 530.61L470.65 520.48L471.15 561.14L471.65 533.74L472.15 534.92L472.65 535.2L473.15 532.09L473.65 559.72L474.15 543.9L474.64 542.83L475.14 541.12L475.64 534.06L476.14 570.19L476.64 531.66L477.14 540.35L477.64 537.7L478.14 533.79L478.63 573.16L479.13 543.09L479.63 539.71L480.13 543.53L480.63 538.03L481.13 566.06L481.63 548.14L482.13 546.55L482.62 545L483.12 539.86L483.62 561.43L484.12 539.16L484.62 524.29L485.12 520L485.62 507.57L486.12 559.92L486.61 525.69L487.11 523.85L487.61 524.8L488.11 523.76L488.61 563.89L489.11 540.97L489.61 537.96L490.11 537.89L490.6 539.64L491.1 570.54L491.6 550.85L492.1 548.46L492.6 542.15L493.1 535.68L493.6 568.47L494.1 541.68L494.59 535.19L495.09 533.93L495.59 528.2L496.09 560.96L496.59 541.62L497.09 536.33L497.59 534.24L498.09 534.25L498.58 564.75L499.08 549.76L499.58 547.33L500.08 542.34L500.58 536.18L501.08 573.08L501.58 541.09L502.08 523.62L502.57 517.22L503.07 493.12L503.57 562.18L504.07 516.99L504.57 510.17L505.07 508.56L505.57 508.39L506.07 549.98L506.56 519.9L507.06 515.27L507.56 517.06L508.06 512.95L508.56 557.67L509.06 519.54L509.56 517.46L510.06 513.31L510.55 510.52L511.05 548.5L511.55 509.5L512.05 516.46L512.55 521.44L513.05 514.4L513.55 564.07L514.05 529.22L514.54 521.29L515.04 515.35L515.54 501.21L516.04 567.3L516.54 523.37L517.04 516.52L517.54 513.25L518.04 513.85L518.53 549.16L519.03 525.68L519.53 523.55L520.03 518.23L520.53 517.02L521.03 565.38L521.53 528.43L522.03 522.32L522.52 524.3L523.02 516.36L523.52 560L524.02 531.17L524.52 528.37L525.02 527.84L525.52 527.23L526.02 562.76L526.51 539.3L527.01 529.32L527.51 522.99L528.01 524.13L528.51 570.48L529.01 539.63L529.51 532.76L530.01 537.59L530.5 530.37L531 579.13L531.5 544.07L532 544.11L532.5 540.7L533 536.93L533.5 584.07L534 553.01L534.5 544.72L534.99 536.33L535.49 525.66L535.99 573.81L536.49 535.71L536.99 514.32L537.49 527.95L537.99 526.16L538.49 563.91L538.98 542.9L539.48 537.25L539.98 530.93L540.48 527.74L540.98 554.4L541.48 536.3L541.98 522.02L542.48 524.82L542.97 522.86L543.47 562.32L543.97 536.29L544.47 528.5L544.97 527.6L545.47 524.69L545.97 566.37L546.46 538.31L546.96 529.79L547.46 531.65L547.96 524.32L548.46 566.5L548.96 535.82L549.46 530.78L549.96 532.01L550.45 525.58L550.95 563.3L551.45 538.32L551.95 527.05L552.45 527.03L552.95 521.18L553.45 560.56L553.95 520.1L554.44 527.7L554.94 529.6L555.44 528.76L555.94 561.95L556.44 541.95L556.94 535.1L557.44 537.48L557.94 534.15L558.43 560.75L558.93 541.84L559.43 538.64L559.93 538.07L560.43 531.63L560.93 562.49L561.43 535.37L561.93 532.21L562.42 529.3L562.92 524.34L563.42 554.98L563.92 535.29L564.42 530.29L564.92 532.49L565.42 529.22L565.92 562.5L566.41 542.4L566.91 540.41L567.41 539.23L567.91 537L568.41 573.51L568.91 551.41L569.41 546.62L569.91 543.78L570.4 542.38L570.9 573.44L571.4 552.43L571.9 545L572.4 581.8L572.4 622.25L-3.66 622.25Z" fill="#7eb26d" fill-opacity="0.1"/>
<path d="M-3.66 544.75L-3.16 541.29L-2.66 569.32L-2.16 549.22L-1.66 545.66L-1.16 543.01L-0.66 541.29L-0.17 568.51L0.33 549.74L0.83 545.86L1.33 540.84L1.83 536.72L2.33 579.83L2.83 548.88L3.33 540.72L3.82 539.61L4.32 529.28L4.82 575.96L5.32 541.12L5.82 532.8L6.32 520.71L6.82 513.5L7.32 568.08L7.81 515.9L8.31 503.81L8.81 493.12L9.31 495.52L9.81 558.35L10.31 514.84L10.81 512.6L11.31 512.25L11.8 509.7L12.3 564.6L12.8 534.5L13.3 530.71L13.8 534.62L14.3 526.08L14.8 573.9L15.3 542.83L15.79 535.62L16.29 529.95L16.79 526.7L17.29 579.83L17.79 537.79L18.29 536.83L18.79 535.18L19.29 526.3L19.78 576.89L20.28 544.19L20.78 536.36L21.28 529.21L21.78 526.16L22.28 575.06L22.78 539.67L23.28 537.25L23.77 528.63L24.27 527.41L24.77 567.67L25.27 542.24L25.77 535.67L26.27 536.08L26.77 534.89L27.27 570.67L27.76 549.22L28.26 542.6L28.76 542.59L29.26 539.13L29.76 583.68L30.26 548.99L30.76 534.94L31.26 532.13L31.75 524.17L32.25 568.08L32.75 535.99L33.25 523.91L33.75 520.53L34.25 516.82L34.75 562.37L35.25 531.54L35.75 527.8L36.24 531.82L36.74 526.46L37.24 564.63L37.74 545.68L38.24 535.94L38.74 540.12L39.24 533.06L39.73 586.57L40.23 546.13L40.73 547.36L41.23 540.46L41.73 536.46L42.23 583.18L42.73 545.75L43.23 537.58L43.72 532.35L44.22 528.48L44.72 579.34L45.22 538L45.72 532.66L46.22 527.7L46.72 522.02L47.22 574.04L47.71 536.91L48.21 530.82L48.71 526.08L49.21 525.56L49.71 578.86L50.21 547.43L50.71 542.54L51.21 537.8L51.7 534.38L52.2 575.76L52.7 547.62L53.2 536.16L53.7 538.5L54.2 530.02L54.7 566.82L55.2 528.77L55.69 535.03L56.19 540.71L56.69 534.1L57.19 577.52L57.69 550L58.19 542.76L58.69 544.32L59.19 540.2L59.68 576.19L60.18 551.39L60.68 550.63L61.18 546.85L61.68 545.05L62.18 585.82L62.68 556.4L63.18 547.22L63.67 546.33L64.17 536.65L64.67 591.39L65.17 546.57L65.67 540.96L66.17 536.11L66.67 532.48L67.17 579.94L67.66 540.19L68.16 532.3L68.66 525.73L69.16 518.32L69.66 570.19L70.16 532.68L70.66 509.5L71.16 518.39L71.65 514.21L72.15 558.76L72.65 528.23L73.15 524.77L73.65 527.44L74.15 520.35L74.65 558.3L75.15 528.47L75.64 526.3L76.14 524.39L76.64 515.86L77.14 568.14L77.64 534.48L78.14 517.82L78.64 520.44L79.14 509.88L79.63 570.42L80.13 528.23L80.63 517.95L81.13 516.37L81.63 501.21L82.13 568.49L82.63 529.5L83.13 526.18L83.62 522.16L84.12 520.29L84.62 571.3L85.12 542.35L85.62 528.79L86.12 520.66L86.62 510.44L87.12 581.75L87.61 525.76L88.11 504.67L88.61 509.52L89.11 489.52L89.61 566.63L90.11 511.52L90.61 493.14L91.11 489.87L91.6 476.17L92.1 553.15L92.6 511.26L93.1 498.54L93.6 499.93L94.1 499.9L94.6 559.47L95.1 521.99L95.59 513.45L96.09 516.02L96.59 511.73L97.09 568.94L97.59 537.23L98.09 525.64L98.59 524.16L99.09 518.73L99.58 581.75L100.08 531.93L100.58 522.39L101.08 515.28L101.58 517.4L102.08 566L102.58 540.14L103.08 530.75L103.57 530.1L104.07 529.67L104.57 568.09L105.07 542.34L105.57 536.62L106.07 529.76L106.57 524.06L107.07 578.86L107.56 536.09L108.06 521.06L108.56 531.21L109.06 523L109.56 573.87L110.06 540.49L110.56 536.34L111.06 528.27L111.55 524.83L112.05 572.35L112.55 535.38L113.05 527.9L113.55 528.51L114.05 521.43L114.55 569.09L115.05 520.1L115.54 532.09L116.04 527.96L116.54 523.59L117.04 568.99L117.54 537.55L118.04 535.62L118.54 528.74L119.04 516.16L119.53 584.64L120.03 528.4L120.53 507.19L121.03 512.72L121.53 510.65L122.03 570.2L122.53 524.37L123.03 524.64L123.52 518.56L124.02 516.48L124.52 560.78L125.02 530.41L125.52 523.49L126.02 523.47L126.52 516.64L127.02 562.55L127.51 533.14L128.01 523.48L128.51 518.82L129.01 512L129.51 568L130.01 525.5L130.51 523.74L131.01 520.5L131.5 518.87L132 565.46L132.5 534.09L133 531.21L133.5 525.17L134 514.52L134.5 567.63L135 523.23L135.49 515.78L135.99 496.59L136.49 499.35L136.99 559.12L137.49 529.02L137.99 518.75L138.49 523.16L138.99 518.09L139.48 575.01L139.98 536.31L140.48 532.79L140.98 531.07L141.48 520.38L141.98 557.77L142.48 527.24L142.98 519.13L143.47 506.61L143.97 509.75L144.47 559.1L144.97 530.11L145.47 528.17L145.97 530.91L146.47 527.8L146.97 563.49L147.46 540.91L147.96 533.72L148.46 530.99L148.96 527.8L149.46 564.28L149.96 542.21L150.46 532.42L150.96 528.65L151.45 520.63L151.95 575.97L152.45 534.27L152.95 512.39L153.45 524.44L153.95 516.81L154.45 573.74L154.95 537.88L155.44 527.43L155.94 531.89L156.44 525.57L156.94 572.76L157.44 537.8L157.94 535.32L158.44 536.72L158.94 529.93L159.43 572.63L159.93 547.91L160.43 539.19L160.93 535.13L161.43 533.92L161.93 569.55L162.43 547.49L162.93 540.92L163.42 541.72L163.92 533.94L164.42 561.47L164.92 528.22L165.42 500.83L165.92 508.23L166.42 503.74L166.92 567.91L167.41 528.23L167.91 514.25L168.41 520.72L168.91 512.52L169.41 566.23L169.91 537.43L170.41 531.64L170.91 533.67L171.4 529.57L171.9 572.39L172.4 540.3L172.9 541.93L173.4 537.37L173.9 534.56L174.4 574.08L174.9 547.94L175.39 542.91L175.89 539.19L176.39 538.2L176.89 576.53L177.39 550.23L177.89 547.69L178.39 540.15L178.89 535.71L179.38 583.68L179.88 544.38L180.38 539.25L180.88 539.85L181.38 529.98L181.88 571.96L182.38 539.84L182.88 530.97L183.37 533.84L183.87 523.18L184.37 575.5L184.87 539.96L185.37 523.72L185.87 522.44L186.37 517.16L186.87 585.61L187.36 531.83L187.86 522.16L188.36 516.02L188.86 512L189.36 559.29L189.86 523.17L190.36 520.63L190.86 517.29L191.35 515.33L191.85 556.97L192.35 527.59L192.85 523.16L193.35 524.92L193.85 523.06L194.35 560.3L194.85 536.06L195.34 536.23L195.84 535.11L196.34 530.41L196.84 565.14L197.34 540.85L197.84 536.82L198.34 533.84L198.84 526.39L199.33 574.4L199.83 542.44L200.33 530.41L200.83 533.04L201.33 522.02L201.83 580.78L202.33 547.65L202.83 542.76L203.32 538.8L203.82 539.14L204.32 587.53L204.82 549.74L205.32 541.37L205.82 536.47L206.32 537.55L206.82 578.26L207.31 549.36L207.81 546.32L208.31 542.9L208.81 542.29L209.31 578.32L209.81 554.45L210.31 550.81L210.81 544.58L211.3 542.91L211.8 571.32L212.3 554.3L212.8 548.32L213.3 545.22L213.8 543.22L214.3 572.31L214.8 549.97L215.29 545.53L215.79 546.56L216.29 543.22L216.79 571.08L217.29 547.44L217.79 541.82L218.29 542.76L218.79 529.87L219.28 575.39L219.78 537.11L220.28 510.08L220.78 526.26L221.28 519.2L221.78 577.6L222.28 543.34L222.78 534.43L223.27 535.11L223.77 531.15L224.27 574.92L224.77 546.34L225.27 537.29L225.77 540.49L226.27 533.33L226.77 568.16L227.26 542.72L227.76 531.66L228.26 534.49L228.76 533.3L229.26 566.65L229.76 544.78L230.26 538.77L230.76 542.77L231.25 536.26L231.75 575.01L232.25 547.42L232.75 539.34L233.25 536.21L233.75 529.41L234.25 572.13L234.75 526.84L235.24 538.76L235.74 540.4L236.24 536.72L236.74 575.58L237.24 554.23L237.74 551.77L238.24 550.53L238.74 543.4L239.23 585.22L239.73 555.1L240.23 549.1L240.73 544.21L241.23 539.66L241.73 572.23L242.23 543.66L242.73 537.96L243.22 531.73L243.72 527.87L244.22 571.02L244.72 537.78L245.22 520.1L245.72 532.26L246.22 527.6L246.72 570.36L247.21 544.34L247.71 542.61L248.21 541.52L248.71 538.52L249.21 572.33L249.71 553L250.21 546.98L250.71 544.85L251.2 537.23L251.7 574.6L252.2 542.81L252.7 539.77L253.2 530.69L253.7 535.2L254.2 576.45L254.7 549.8L255.19 548.44L255.69 549.41L256.19 547.73L256.69 583.29L257.19 557.1L257.69 547.99L258.19 547.58L258.69 538.82L259.18 576.04L259.68 550.55L260.18 541.62L260.68 533.2L261.18 533.73L261.68 569.6L262.18 547.84L262.68 538.49L263.17 538.16L263.67 536.48L264.17 569.62L264.67 546.82L265.17 545.23L265.67 542.63L266.17 542.84L266.67 576.61L267.16 554.86L267.66 551.55L268.16 548.53L268.66 544.62L269.16 576.09L269.66 553.43L270.16 547.43L270.66 545.63L271.15 538.19L271.65 580.14L272.15 543.97L272.65 532.62L273.15 538.21L273.65 538.44L274.15 585.61L274.65 554.9L275.14 555.03L275.64 547.62L276.14 545.32L276.64 578.29L277.14 556.92L277.64 545.77L278.14 545.49L278.64 540.96L279.13 569.93L279.63 552.42L280.13 543.59L280.63 545.57L281.13 539.62L281.63 570.67L282.13 548.72L282.63 547.65L283.12 544.84L283.62 541.1L284.12 570.58L284.62 551.97L285.12 546.64L285.62 542.7L286.12 540.92L286.62 574.87L287.11 547.63L287.61 544.43L288.11 538.98L288.61 539.81L289.11 573.9L289.61 551.9L290.11 547L290.61 546.93L291.1 543.56L291.6 575.83L292.1 557.88L292.6 552.87L293.1 548.71L293.6 547.82L294.1 585.61L294.6 561.64L295.09 556.63L295.59 552.68L296.09 547.7L296.59 584.5L297.09 554.05L297.59 547.68L298.09 546.3L298.59 541.66L299.08 560.47L299.58 546.14L300.08 546.1L300.58 546.76L301.08 545.52L301.58 565.33L302.08 554.92L302.58 552.57L303.07 552.31L303.57 548.02L304.07 577.09L304.57 555.08L305.07 547.78L305.57 549.57L306.07 545.14L306.57 576.62L307.06 554.55L307.56 549.17L308.06 547.05L308.56 544.98L309.06 573.02L309.56 553.82L310.06 550.28L310.56 545.81L311.05 544.36L311.55 569.53L312.05 550.21L312.55 545.18L313.05 540.3L313.55 535.2L314.05 560.61L314.55 539.7L315.04 531.74L315.54 531.53L316.04 522.98L316.54 554.57L317.04 529.35L317.54 523.52L318.04 517.88L318.54 511.64L319.03 551.57L319.53 519.59L320.03 518.1L320.53 506.84L321.03 502.38L321.53 565.38L322.03 498.9L322.53 513.14L323.02 513.78L323.52 507.34L324.02 562.71L324.52 523.02L325.02 518.9L325.52 512.63L326.02 507.08L326.52 565.29L327.01 505.65L327.51 520.01L328.01 522.63L328.51 522.64L329.01 570.19L329.51 536.82L330.01 526.99L330.51 526.04L331 517.72L331.5 561.02L332 530.85L332.5 509.5L333 519.41L333.5 513.01L334 559.8L334.5 527.59L335 523.53L335.49 524.59L335.99 517.24L336.49 548.29L336.99 526.52L337.49 522.81L337.99 523.69L338.49 522.24L338.98 563.95L339.48 536.1L339.98 535.49L340.48 535.91L340.98 533.39L341.48 570.88L341.98 548.97L342.48 543.47L342.97 543.7L343.47 532.6L343.97 569.12L344.47 533.62L344.97 527.11L345.47 515.28L345.97 516.31L346.47 558.6L346.96 531.86L347.46 528.42L347.96 526.42L348.46 523.74L348.96 570.65L349.46 538.41L349.96 535.36L350.46 541.16L350.95 534.03L351.45 579.83L351.95 547.6L352.45 538.82L352.95 540.55L353.45 535.6L353.95 567.14L354.45 543.99L354.94 542.66L355.44 541.43L355.94 536.43L356.44 568.76L356.94 546.18L357.44 545.92L357.94 543.06L358.44 540.62L358.93 571.2L359.43 552.9L359.93 549.52L360.43 545.64L360.93 540.89L361.43 583.68L361.93 551.89L362.43 546.25L362.92 536.3L363.42 518.76L363.92 566.32L364.42 526.03L364.92 494.08L365.42 512.32L365.92 508.54L366.42 566.82L366.91 533.11L367.41 528.59L367.91 530.75L368.41 526.75L368.91 564.64L369.41 539.9L369.91 534.63L370.41 534.26L370.9 530.31L371.4 566.84L371.9 542.86L372.4 531.92L372.9 530.25L373.4 527.82L373.9 568.34L374.4 540.88L374.89 531.61L375.39 531.85L375.89 527.65L376.39 568.69L376.89 541.9L377.39 530.87L377.89 530.09L378.39 527.55L378.88 568.29L379.38 537.04L379.88 534.77L380.38 529.79L380.88 526.98L381.38 565.24L381.88 537.47L382.38 532.73L382.88 533.17L383.37 531.52L383.87 562.26L384.37 544.44L384.87 539.65L385.37 539.28L385.87 532.06L386.37 564.75L386.87 537.78L387.36 525.88L387.86 531.72L388.36 529.52L388.86 561.23L389.36 541.03L389.86 543.27L390.36 540.75L390.85 539.16L391.35 567.33L391.85 546.97L392.35 540.27L392.85 539.81L393.35 532.29L393.85 563.76L394.35 536.65L394.84 532.04L395.34 521.64L395.84 522.1L396.34 571.27L396.84 537.89L397.34 528.94L397.84 528.93L398.34 526.19L398.83 565.41L399.33 540.03L399.83 533.68L400.33 535.26L400.83 529.99L401.33 556.35L401.83 538.75L402.33 531.12L402.82 525.65L403.32 520.95L403.82 550.99L404.32 527.69L404.82 509.5L405.32 514.68L405.82 513.03L406.32 559.42L406.81 525.96L407.31 524.58L407.81 527.62L408.31 521.34L408.81 561.84L409.31 537.49L409.81 530.01L410.31 530.27L410.8 527.26L411.3 567.34L411.8 539.12L412.3 539.85L412.8 537.06L413.3 532.5L413.8 581.75L414.3 544.28L414.79 543.85L415.29 539.98L415.79 536.05L416.29 568.78L416.79 541.14L417.29 535.68L417.79 531.84L418.29 526.91L418.78 557.88L419.28 533.14L419.78 529.61L420.28 530.62L420.78 523.56L421.28 553.81L421.78 534.79L422.28 529.98L422.77 533.7L423.27 532.16L423.77 555.02L424.27 541.07L424.77 537.25L425.27 537.47L425.77 532.22L426.27 556.35L426.76 536.4L427.26 533.94L427.76 530.91L428.26 526.84L428.76 557.3L429.26 536.07L429.76 533.43L430.26 535.07L430.75 531.45L431.25 567.78L431.75 541.97L432.25 539.92L432.75 539.14L433.25 530.67L433.75 573.44L434.25 543L434.75 527.8L435.24 530.68L435.74 529.39L436.24 568.04L436.74 540.17L437.24 539.21L437.74 534.83L438.24 533.13L438.73 569.21L439.23 545.92L439.73 538.56L440.23 533.98L440.73 530.66L441.23 573.05L441.73 529.73L442.23 537.77L442.72 540.93L443.22 534.52L443.72 576.94L444.22 547.44L444.72 542.5L445.22 540.62L445.72 533.23L446.22 568.47L446.71 541.78L447.21 535.51L447.71 532.44L448.21 526L448.71 583.68L449.21 539.58L449.71 529.74L450.21 524.89L450.7 518.17L451.2 549.96L451.7 529.41L452.2 527.41L452.7 527.24L453.2 528.15L453.7 556.71L454.2 537.8L454.69 534.3L455.19 531.07L455.69 526.03L456.19 550.9L456.69 523.56L457.19 532.26L457.69 528.92L458.19 526.82L458.68 563.22L459.18 536.94L459.68 536.35L460.18 532.26L460.68 525.93L461.18 557.98L461.68 537.16L462.18 519.71L462.67 527.45L463.17 523.13L463.67 561.41L464.17 536.18L464.67 533.29L465.17 536.37L465.67 531.97L466.17 571.48L466.66 548.01L467.16 540.05L467.66 537.92L468.16 536.96L468.66 575.97L469.16 541.2L469.66 537.77L470.16 530.61L470.65 520.48L471.15 561.14L471.65 533.74L472.15 534.92L472.65 535.2L473.15 532.09L473.65 559.72L474.15 543.9L474.64 542.83L475.14 541.12L475.64 534.06L476.14 570.19L476.64 531.66L477.14 540.35L477.64 537.7L478.14 533.79L478.63 573.16L479.13 543.09L479.63 539.71L480.13 543.53L480.63 538.03L481.13 566.06L481.63 548.14L482.13 546.55L482.62 545L483.12 539.86L483.62 561.43L484.12 539.16L484.62 524.29L485.12 520L485.62 507.57L486.12 559.92L486.61 525.69L487.11 523.85L487.61 524.8L488.11 523.76L488.61 563.89L489.11 540.97L489.61 537.96L490.11 537.89L490.6 539.64L491.1 570.54L491.6 550.85L492.1 548.46L492.6 542.15L493.1 535.68L493.6 568.47L494.1 541.68L494.59 535.19L495.09 533.93L495.59 528.2L496.09 560.96L496.59 541.62L497.09 536.33L497.59 534.24L498.09 534.25L498.58 564.75L499.08 549.76L499.58 547.33L500.08 542.34L500.58 536.18L501.08 573.08L501.58 541.09L502.08 523.62L502.57 517.22L503.07 493.12L503.57 562.18L504.07 516.99L504.57 510.17L505.07 508.56L505.57 508.39L506.07 549.98L506.56 519.9L507.06 515.27L507.56 517.06L508.06 512.95L508.56 557.67L509.06 519.54L509.56 517.46L510.06 513.31L510.55 510.52L511.05 548.5L511.55 509.5L512.05 516.46L512.55 521.44L513.05 514.4L513.55 564.07L514.05 529.22L514.54 521.29L515.04 515.35L515.54 501.21L516.04 567.3L516.54 523.37L517.04 516.52L517.54 513.25L518.04 513.85L518.53 549.16L519.03 525.68L519.53 523.55L520.03 518.23L520.53 517.02L521.03 565.38L521.53 528.43L522.03 522.32L522.52 524.3L523.02 516.36L523.52 560L524.02 531.17L524.52 528.37L525.02 527.84L525.52 527.23L526.02 562.76L526.51 539.3L527.01 529.32L527.51 522.99L528.01 524.13L528.51 570.48L529.01 539.63L529.51 532.76L530.01 537.59L530.5 530.37L531 579.13L531.5 544.07L532 544.11L532.5 540.7L533 536.93L533.5 584.07L534 553.01L534.5 544.72L534.99 536.33L535.49 525.66L535.99 573.81L536.49 535.71L536.99 514.32L537.49 527.95L537.99 526.16L538.49 563.91L538.98 542.9L539.48 537.25L539.98 530.93L540.48 527.74L540.98 554.4L541.48 536.3L541.98 522.02L542.48 524.82L542.97 522.86L543.47 562.32L543.97 536.29L544.47 528.5L544.97 527.6L545.47 524.69L545.97 566.37L546.46 538.31L546.96 529.79L547.46 531.65L547.96 524.32L548.46 566.5L548.96 535.82L549.46 530.78L549.96 532.01L550.45 525.58L550.95 563.3L551.45 538.32L551.95 527.05L552.45 527.03L552.95 521.18L553.45 560.56L553.95 520.1L554.44 527.7L554.94 529.6L555.44 528.76L555.94 561.95L556.44 541.95L556.94 535.1L557.44 537.48L557.94 534.15L558.43 560.75L558.93 541.84L559.43 538.64L559.93 538.07L560.43 531.63L560.93 562.49L561.43 535.37L561.93 532.21L562.42 529.3L562.92 524.34L563.42 554.98L563.92 535.29L564.42 530.29L564.92 532.49L565.42 529.22L565.92 562.5L566.41 542.4L566.91 540.41L567.41 539.23L567.91 537L568.41 573.51L568.91 551.41L569.41 546.62L569.91 543.78L570.4 542.38L570.9 573.44L571.4 552.43L571.9 545L572.4 581.8" stroke="#7eb26d" stroke-width="1" stroke-linejoin="round" fill="none"/>
<g class="ax">
<text x="36" y="637.24" text-anchor="middle" font-size="9.6" fill="#52545c">16:00</text>
<text x="95.79" y="637.24" text-anchor="middle" font-size="9.6" fill="#52545c">18:00</text>
<text x="155.58" y="637.24" text-anchor="middle" font-size="9.6" fill="#52545c">20:00</text>
<text x="215.37" y="637.24" text-anchor="middle" font-size="9.6" fill="#52545c">22:00</text>
<text x="275.16" y="637.24" text-anchor="middle" font-size="9.6" fill="#52545c">00:00</text>
<text x="334.95" y="637.24" text-anchor="middle" font-size="9.6" fill="#52545c">02:00</text>
<text x="394.74" y="637.24" text-anchor="middle" font-size="9.6" fill="#52545c">04:00</text>
<text x="454.53" y="637.24" text-anchor="middle" font-size="9.6" fill="#52545c">06:00</text>
<text x="514.32" y="637.24" text-anchor="middle" font-size="9.6" fill="#52545c">08:00</text>
<text x="574.11" y="637.24" text-anchor="middle" font-size="9.6" fill="#52545c">10:00</text>
</g>
<path d="M583.1 664V651a2.85 2.85 0 0 1 5.7 0V664Z" fill="#c7d0d9"/>
<path d="M589.1 668.5H593.5V664.5" stroke="#adb5c1" stroke-width="1.5" fill="none"/>
<g stroke="#0a80b2" fill="none" stroke-width="1.25"><circle cx="521.9" cy="409.1" r="3.7"/><path d="M521.5 409.7L522.7 407.3" stroke-width="1"/></g>
</svg>
<h2 class="title" style="left:288.1px;width:200px;text-align:center;top:7px">DNS Queries / minute</h2>
<span class="tinfo" style="right:9.7px;top:7.6px">Last 24 hours</span>
</section>
<section class="panel" style="left:605px;top:396px;width:779px;height:277px">
<svg class="gfx" width="779" height="277" viewBox="605 396 779 277">
<rect x="605.9" y="396.4" width="777" height="275" rx="2.4" fill="#fff" stroke="#dce2ec" stroke-width="1.05"/>
<path d="M645.5 436.6H1364.4M645.5 473.73H1364.4M645.5 510.86H1364.4M645.5 547.99H1364.4M645.5 585.12H1364.4M645.5 622.25H1364.4M701.4 436.6V622.25M804.45 436.6V622.25M907.3 436.6V622.25M1009.7 436.6V622.25M1113.3 436.6V622.25M1216.3 436.6V622.25M1319.3 436.6V622.25" stroke="#e6e6e6" stroke-width="0.88" fill="none"/>
<g fill="#7eb26d">
<rect x="653.9" y="467.7" width="34.2" height="154.55"/>
<rect x="705.43" y="468.7" width="34.2" height="153.55"/>
<rect x="756.96" y="463" width="34.2" height="159.25"/>
<rect x="808.49" y="522.5" width="34.2" height="99.75"/>
<rect x="860.02" y="516.1" width="34.2" height="106.15"/>
<rect x="911.55" y="521.8" width="34.2" height="100.45"/>
<rect x="963.08" y="516.1" width="34.2" height="106.15"/>
<rect x="1014.61" y="515.4" width="34.2" height="106.85"/>
<rect x="1066.14" y="519.5" width="34.2" height="102.75"/>
<rect x="1117.67" y="517.1" width="34.2" height="105.15"/>
<rect x="1169.2" y="525.8" width="34.2" height="96.45"/>
<rect x="1220.73" y="520" width="34.2" height="102.25"/>
<rect x="1272.26" y="523" width="34.2" height="99.25"/>
<rect x="1323.79" y="531" width="34.2" height="91.25"/>
</g>
<g class="ax">
<text x="640.2" y="439.51" text-anchor="end" font-size="9.8" fill="#52545c">12 Mil</text>
<text x="640.2" y="476.64" text-anchor="end" font-size="9.8" fill="#52545c">10 Mil</text>
<text x="640.2" y="513.77" text-anchor="end" font-size="9.8" fill="#52545c">8 Mil</text>
<text x="640.2" y="550.9" text-anchor="end" font-size="9.8" fill="#52545c">6 Mil</text>
<text x="640.2" y="588.03" text-anchor="end" font-size="9.8" fill="#52545c">4 Mil</text>
<text x="640.2" y="625.16" text-anchor="end" font-size="9.8" fill="#52545c">2 Mil</text>
<text x="701.7" y="637.84" text-anchor="middle" font-size="9.6" fill="#52545c" letter-spacing="0.4">3/25</text>
<text x="804.75" y="637.84" text-anchor="middle" font-size="9.6" fill="#52545c" letter-spacing="0.4">3/27</text>
<text x="907.6" y="637.84" text-anchor="middle" font-size="9.6" fill="#52545c" letter-spacing="0.4">3/29</text>
<text x="1010" y="637.84" text-anchor="middle" font-size="9.6" fill="#52545c" letter-spacing="0.4">3/31</text>
<text x="1113.6" y="637.84" text-anchor="middle" font-size="9.6" fill="#52545c" letter-spacing="0.4">4/2</text>
<text x="1216.6" y="637.84" text-anchor="middle" font-size="9.6" fill="#52545c" letter-spacing="0.4">4/4</text>
<text x="1319.6" y="637.84" text-anchor="middle" font-size="9.6" fill="#52545c" letter-spacing="0.4">4/6</text>
</g>
<rect x="622.3" y="653.4" width="10.3" height="3.2" rx="1.2" fill="#7eb26d"/>
</svg>
<h2 class="title" style="left:288.9px;width:200px;text-align:center;top:7px">DNS Queries / day</h2>
<div class="legend"><div class="lrow"><span class="nm" style="left:31.5px;top:252.8px;letter-spacing:-0.05px">DNS queries</span></div></div>
</section>
</main>
</body>
</html>
